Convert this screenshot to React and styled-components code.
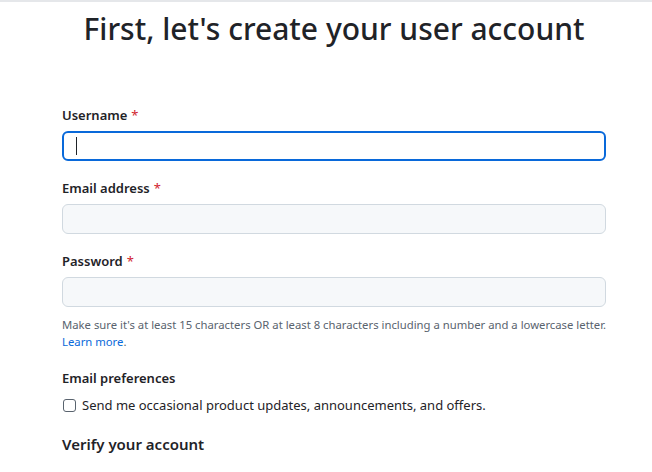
import React from 'react';
import styled, { createGlobalStyle } from 'styled-components';

const GlobalStyle = createGlobalStyle`
  html, body {
    margin: 0;
    padding: 0;
    background: #ffffff;
  }
  body {
    font-family: 'Noto Sans', 'Liberation Sans', sans-serif;
    color: #1f2328;
  }
`;

const Page = styled.div`
  border-top: 2px solid #e5e7ea;
  padding: 0 46px 0 62px;
`;

const Title = styled.h1`
  margin: 7px 0 0 0;
  font-size: 30px;
  line-height: 40px;
  font-weight: 500;
  text-align: center;
`;

const Form = styled.form`
  margin-top: 56px;
  width: 544px;
`;

const Field = styled.div`
  margin-bottom: 17px;
`;

const Label = styled.label`
  display: block;
  font-size: 13px;
  line-height: 20px;
  font-weight: 600;
  margin-bottom: 6px;
`;

const Required = styled.span`
  color: #d1242f;
  margin-left: 4px;
  font-weight: 400;
`;

const Input = styled.input`
  box-sizing: border-box;
  display: block;
  width: 100%;
  height: 30px;
  border-radius: 6px;
  font-family: inherit;
  font-size: 14px;
  padding: 0 12px;
  outline: none;
  background: #f6f8fa;
  border: 1px solid #d1d9e0;
`;

const FocusedInput = styled.div`
  box-sizing: border-box;
  width: 100%;
  height: 30px;
  border-radius: 6px;
  border: 2px solid #0969da;
  background: #ffffff;
  display: flex;
  align-items: center;
  padding-left: 12px;
  &::after {
    content: '';
    width: 1px;
    height: 18px;
    background: #1f2328;
  }
`;

const Help = styled.p`
  margin: -8px 0 0 0;
  font-size: 11.3px;
  line-height: 17px;
  color: #59636e;
  white-space: nowrap;
`;

const Link = styled.a`
  color: #0969da;
  text-decoration: none;
`;

const SectionTitle = styled.h3`
  margin: 18px 0 0 0;
  font-size: 13px;
  line-height: 20px;
  font-weight: 600;
`;

const CheckRow = styled.label`
  display: flex;
  align-items: center;
  gap: 6px;
  margin-top: 7px;
  font-size: 13px;
  line-height: 20px;
  color: #1f2328;
`;

const Box = styled.span`
  box-sizing: border-box;
  width: 13px;
  height: 13px;
  margin-left: 1px;
  border: 1px solid #59636e;
  border-radius: 3px;
  background: #ffffff;
`;

const Heading = styled.h2`
  margin: 17px 0 0 0;
  font-size: 15px;
  line-height: 24px;
  font-weight: 600;
`;

export default function App() {
  return (
    <>
      <GlobalStyle />
      <Page>
        <Title>First, let's create your user account</Title>
        <Form onSubmit={e => e.preventDefault()}>
          <Field>
            <Label>Username<Required>*</Required></Label>
            <FocusedInput />
          </Field>
          <Field>
            <Label>Email address<Required>*</Required></Label>
            <Input type="email" />
          </Field>
          <Field>
            <Label>Password<Required>*</Required></Label>
            <Input type="password" />
          </Field>
          <Help>
            Make sure it's at least 15 characters OR at least 8 characters including a number and a lowercase letter.
            <br />
            <Link href="#">Learn more</Link>.
          </Help>
          <SectionTitle>Email preferences</SectionTitle>
          <CheckRow>
            <Box />
            Send me occasional product updates, announcements, and offers.
          </CheckRow>
          <Heading>Verify your account</Heading>
        </Form>
      </Page>
    </>
  );
}
